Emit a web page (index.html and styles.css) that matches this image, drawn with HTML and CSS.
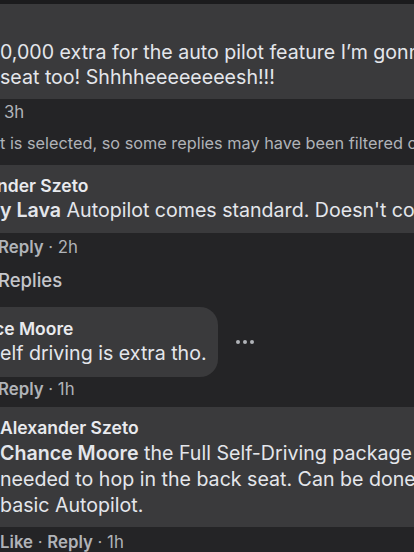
FILE: index.html
```html
<!DOCTYPE html>
<html lang="en">
<head>
    <meta charset="UTF-8">
    <meta name="viewport" content="width=device-width, initial-scale=1.0">
    <title>Comments</title>
    <link rel="stylesheet" href="styles.css">
</head>
<body>

    <div class="top-edge"></div>

    <!-- first comment -->
    <div class="bubble wide first">
        <p class="text">0,000 extra for the auto pilot feature I’m gonna</p>
        <p class="text">seat too! Shhhheeeeeeeesh!!!</p>
    </div>
    <div class="meta time-only">3h</div>

    <div class="note">t is selected, so some replies may have been filtered out.</div>

    <!-- reply from Alexander -->
    <div class="bubble wide second">
        <p class="name shift">nder Szeto</p>
        <p class="text"><b>y Lava</b> Autopilot comes standard. Doesn't cost extra</p>
    </div>
    <div class="meta shift"><b>Reply</b> · 2h</div>

    <div class="replies">Replies</div>

    <!-- reply from Chance -->
    <div class="reply-row">
        <div class="bubble short">
            <p class="name cut">ce Moore</p>
            <p class="text">elf driving is extra tho.</p>
        </div>
        <div class="dots"><span></span><span></span><span></span></div>
    </div>
    <div class="meta shift after-short"><b>Reply</b> · 1h</div>

    <!-- answer -->
    <div class="bubble wide fourth">
        <p class="name">Alexander Szeto</p>
        <p class="text tall"><b>Chance Moore</b> the Full Self-Driving package is</p>
        <p class="text tall">needed to hop in the back seat. Can be done with</p>
        <p class="text tall">basic Autopilot.</p>
    </div>
    <div class="meta last"><b>Like</b> · <b>Reply</b> · 1h</div>

</body>
</html>
```

FILE: styles.css
```css
body {
    margin: 0;
    background: #242426;
    color: #e4e6eb;
    font-family: Inter, "Noto Sans", sans-serif;
    overflow: hidden;
    white-space: nowrap;
    width: 414px;
    height: 552px;
}

p {
    margin: 0;
}

.top-edge {
    height: 4px;
    background: #1b1b1d;
}

.bubble {
    background: #3a3a3c;
    overflow: hidden;
}

.bubble.first {
    padding: 35.5px 0 8.5px;
}

.bubble.second {
    margin-top: 12px;
    padding: 8.5px 0 10px;
}

.bubble.fourth {
    margin-top: 8px;
    padding: 9px 0 9px;
}

.name {
    font-size: 17.5px;
    font-weight: 600;
    line-height: 24px;
    color: #e9eaee;
}

.name.shift {
    margin-left: -3px;
}

.name.cut {
    margin-left: -6px;
}

.text {
    font-size: 19.6px;
    line-height: 25.5px;
}

.text.tall {
    line-height: 26px;
}

.text b {
    font-weight: 600;
}

.meta {
    font-size: 16.8px;
    line-height: 20px;
    color: #b0b3b8;
    padding: 4px 0 0 1px;
}

.meta b {
    font-weight: 600;
}

.meta.shift {
    margin-left: -3px;
}

.meta.time-only {
    padding-left: 4px;
    padding-top: 3px;
}

.meta.after-short {
    padding-top: 2px;
}

.meta.last {
    padding-left: 0;
    padding-top: 5px;
}

.note {
    font-size: 16.3px;
    line-height: 20px;
    color: #b0b3b8;
    margin-top: 11px;
}

.replies {
    font-size: 18.5px;
    font-weight: 500;
    line-height: 24px;
    color: #c4c6cb;
    margin: 11px 0 0 -2px;
}

.reply-row {
    display: flex;
    align-items: center;
    margin-top: 15px;
}

.bubble.short {
    width: 238px;
    margin-left: -20px;
    padding: 10px 0 10.5px 20px;
    box-sizing: border-box;
    border-radius: 0 18px 18px 0;
}

.dots {
    display: flex;
    gap: 3px;
    margin-left: 18px;
}

.dots span {
    width: 4px;
    height: 4px;
    border-radius: 50%;
    background: #b0b3b8;
}
```
